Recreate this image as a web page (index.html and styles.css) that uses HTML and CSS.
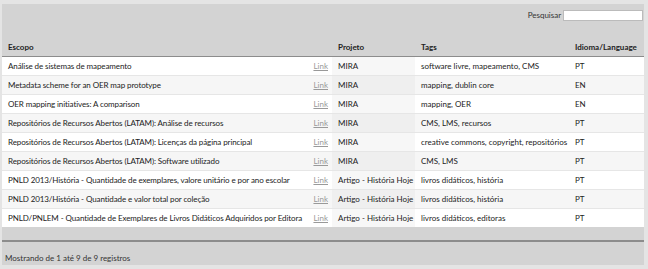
FILE: index.html
```html
<!DOCTYPE html>
<html lang="pt">
  <head>
    <meta charset="UTF-8" />
    <title>Escopo</title>
    <link rel="stylesheet" href="styles.css">
  </head>
  <body>
    <div class="wrapper">
      <div class="filter">
        <label>Pesquisar <input type="text" /></label>
      </div>
      <table class="data">
        <thead>
          <tr>
            <th class="c-scope">Escopo</th>
            <th class="c-link"></th>
            <th class="c-proj">Projeto</th>
            <th class="c-tags">Tags</th>
            <th class="c-lang">Idioma/Language</th>
          </tr>
        </thead>
        <tbody>
          <tr class="odd">
            <td class="scope">Análise de sistemas de mapeamento</td>
            <td class="link"><a href="#">Link</a></td>
            <td class="sorted">MIRA</td>
            <td>software livre, mapeamento, CMS</td>
            <td>PT</td>
          </tr>
          <tr class="even">
            <td class="scope">Metadata scheme for an OER map prototype</td>
            <td class="link"><a href="#">Link</a></td>
            <td class="sorted">MIRA</td>
            <td>mapping, dublin core</td>
            <td>EN</td>
          </tr>
          <tr class="odd">
            <td class="scope">OER mapping initiatives: A comparison</td>
            <td class="link"><a href="#">Link</a></td>
            <td class="sorted">MIRA</td>
            <td>mapping, OER</td>
            <td>EN</td>
          </tr>
          <tr class="even">
            <td class="scope">Repositórios de Recursos Abertos (LATAM): Análise de recursos</td>
            <td class="link"><a href="#">Link</a></td>
            <td class="sorted">MIRA</td>
            <td>CMS, LMS, recursos</td>
            <td>PT</td>
          </tr>
          <tr class="odd">
            <td class="scope">Repositórios de Recursos Abertos (LATAM): Licenças da página principal</td>
            <td class="link"><a href="#">Link</a></td>
            <td class="sorted">MIRA</td>
            <td>creative commons, copyright, repositórios</td>
            <td>PT</td>
          </tr>
          <tr class="even">
            <td class="scope">Repositórios de Recursos Abertos (LATAM): Software utilizado</td>
            <td class="link"><a href="#">Link</a></td>
            <td class="sorted">MIRA</td>
            <td>CMS, LMS</td>
            <td>PT</td>
          </tr>
          <tr class="odd">
            <td class="scope">PNLD 2013/História - Quantidade de exemplares, valore unitário e por ano escolar</td>
            <td class="link"><a href="#">Link</a></td>
            <td class="sorted">Artigo - História Hoje</td>
            <td>livros didáticos, história</td>
            <td>PT</td>
          </tr>
          <tr class="even">
            <td class="scope">PNLD 2013/História - Quantidade e valor total por coleção</td>
            <td class="link"><a href="#">Link</a></td>
            <td class="sorted">Artigo - História Hoje</td>
            <td>livros didáticos, história</td>
            <td>PT</td>
          </tr>
          <tr class="odd">
            <td class="scope">PNLD/PNLEM - Quantidade de Exemplares de Livros Didáticos Adquiridos por Editora</td>
            <td class="link"><a href="#">Link</a></td>
            <td class="sorted">Artigo - História Hoje</td>
            <td>livros didáticos, editoras</td>
            <td>PT</td>
          </tr>
        </tbody>
      </table>
      <div class="info">Mostrando de 1 até 9 de 9 registros</div>
    </div>
  </body>
</html>
```

FILE: styles.css
```css
body {
  margin: 0;
  padding: 4px 4px 4px 2px;
  background-color: #e4e4e4;
  font-family: Lato, "Open Sans", sans-serif;
  font-size: 8px;
  color: #222;
}
.wrapper {
  height: 261px;
  background-color: #d3d3d3;
}
.filter {
  height: 20px;
  padding: 6px 1px 0 0;
  text-align: right;
  color: #333;
}
.filter input {
  width: 78px;
  height: 9px;
  margin: 0;
  padding: 0;
  border: 1px solid #bbb;
  vertical-align: middle;
  font-size: 8px;
}
.data {
  width: 642px;
  border-collapse: collapse;
  table-layout: fixed;
}
.data th {
  height: 22px;
  padding: 0 6px 4px;
  text-align: left;
  vertical-align: bottom;
  font-weight: bold;
  border-bottom: 1px solid #8c8c8c;
}
.data td {
  height: 18px;
  padding: 0 6px;
  white-space: nowrap;
  overflow: hidden;
  border-top: 1px solid #e6e6e6;
}
.data td.scope {
  padding-right: 0;
  letter-spacing: -0.1px;
}
.data .c-scope {
  width: 292px;
}
.data .c-link {
  width: 14px;
}
.data .c-proj {
  width: 71px;
}
.data .c-tags {
  width: 142px;
}
.odd td {
  background-color: #fff;
}
.even td {
  background-color: #f6f6f6;
}
.odd td.sorted {
  background-color: #f7f7f7;
}
.even td.sorted {
  background-color: #efefef;
}
.data td.link {
  text-align: right;
  padding: 0 4px 0 0;
}
.link a {
  color: #999;
}
.info {
  margin-top: 13px;
  border-top: 2px solid #8c8c8c;
  padding: 11px 0 0 3px;
  color: #333;
}
```
